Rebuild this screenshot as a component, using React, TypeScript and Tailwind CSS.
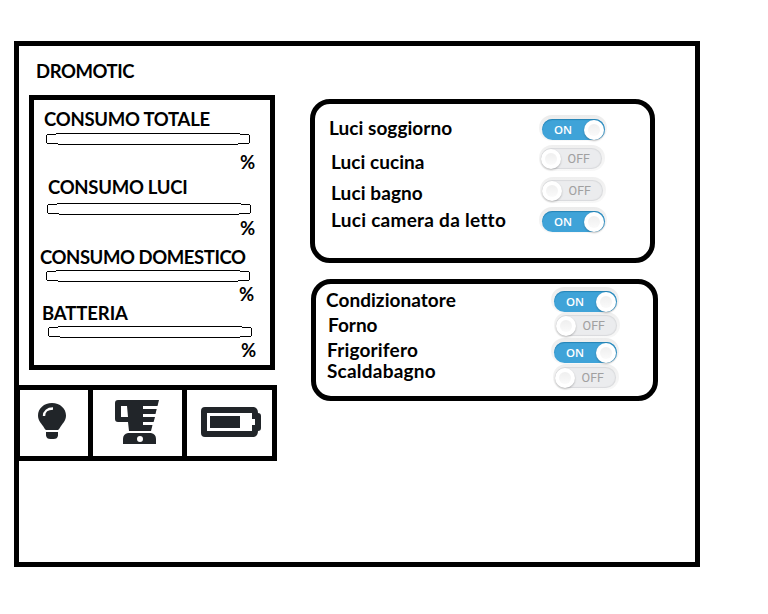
import React from "react";

const textStyle =
  "block h-6 whitespace-nowrap font-['Lato','Liberation_Sans',sans-serif] font-bold leading-6 text-black [font-variant-ligatures:none]";

function Heading({ text, className }: { text: string; className: string }) {
  return <span className={`${textStyle} text-[18.5px] ${className}`}>{text}</span>;
}

function Label({ text, className }: { text: string; className: string }) {
  return <span className={`${textStyle} text-[19px] ${className}`}>{text}</span>;
}

function Meter({ className }: { className: string }) {
  return (
    <svg className={`block h-3 w-[204px] ${className}`} viewBox="0 0 204 12" shapeRendering="crispEdges">
      <path
        d="M10 0H194V1H10ZM1 1H10V2H1ZM194 1H203V2H194ZM0 2H1V10H0ZM203 2H204V10H203ZM1 10H12V11H1ZM192 10H203V11H192ZM12 11H192V12H12Z"
        fill="#000"
      />
    </svg>
  );
}

function Toggle({ on, className }: { on: boolean; className: string }) {
  return on ? (
    <div className={`h-[26px] w-[68px] rounded-full bg-gradient-to-b from-[#ececec] to-[#f8f8f8] pl-[3px] pt-1 ${className}`}>
      <div className="flex h-[21px] w-[63px] items-center justify-between rounded-full bg-[#3fa3d8] pl-3 pr-px shadow-[inset_0_1px_1px_#2583b5]">
        <span className="font-['Open_Sans',sans-serif] text-[11.5px] font-semibold leading-none text-white">ON</span>
        <Knob />
      </div>
    </div>
  ) : (
    <div className={`h-[26px] w-[66px] rounded-full bg-gradient-to-b from-[#efefef] to-[#f8f8f8] pl-[2px] pt-[3px] ${className}`}>
      <div className="flex h-[21px] w-[61px] items-center justify-between rounded-full bg-[#ebecee] pr-3 shadow-[inset_0_0_1px_1px_#d9dadc]">
        <Knob />
        <span className="mt-px font-['Roboto',sans-serif] text-[12.5px] leading-none text-[#a0a0a0]">OFF</span>
      </div>
    </div>
  );
}

function Knob() {
  return (
    <div className="flex size-5 items-center justify-center rounded-full bg-white shadow-[0_1px_2px_#00000040]">
      <div className="size-3 rounded-full bg-gradient-to-b from-[#efefef] to-[#fafafa]" />
    </div>
  );
}

function Bulb() {
  return (
    <svg className="h-[37px] w-7" viewBox="0 0 28 37">
      <path
        d="M14 0C6 0 0 5.500 0 12.500C0 17.500 3 20 5 23C6.500 25.500 7 26.500 8 27H20C21 26.500 21.500 25.500 23 23C25 20 28 17.500 28 12.500C28 5.500 22 0 14 0ZM8 29H20V32.500Q19.500 36 15.500 36H12.500Q8.500 36 8 32.500Z"
        fill="#212529"
      />
      <path d="M6 13C6 8.500 9.500 5.500 15 5.500" fill="none" stroke="#fff" strokeWidth="2.4" />
    </svg>
  );
}

function Blender() {
  return (
    <svg className="h-11 w-11" viewBox="0 0 44 44">
      <path
        fillRule="evenodd"
        d="M3 0H44L42.500 6H28V9H41.700L40.500 14H28V17H40L38.600 22H28V25H37.500L36 31H14L13 22H3Q0 22 0 19V3Q0 0 3 0ZM6 6V17H13L12 6Z"
        fill="#212529"
      />
      <path
        fillRule="evenodd"
        d="M13 33H36Q41 34 41 39V44H8V39Q8 34 13 33ZM25 36A3 3 0 1 0 25 42A3 3 0 1 0 25 36Z"
        fill="#212529"
      />
    </svg>
  );
}

function Battery() {
  return (
    <svg className="h-[30px] w-[60px]" viewBox="0 0 60 30">
      <path
        fillRule="evenodd"
        d="M4 0H53Q57 1 57 6Q60 6 60 9V21Q60 24 57 24Q57 29 53 30H4Q0 30 0 26V4Q0 0 4 0ZM6 6V24H51V18H54V12H51V6Z"
        fill="#212529"
      />
      <path d="M9 9H39V21H9Z" fill="#212529" />
    </svg>
  );
}

export default function App() {
  return (
    <div className="h-[614px] w-[768px] overflow-hidden bg-white pl-3.5 pt-[41px]">
      <main className="flex h-[526px] w-[686px] border-[5px] border-black">
        <div className="w-[258px]">
          <Heading text="DROMOTIC" className="ml-[17px] mt-[13px] tracking-[-0.42px]" />
          <section className="ml-2.5 mt-3 flex h-[275px] w-[246px] flex-col border-[5px] border-black">
            <Heading text="CONSUMO TOTALE" className="ml-2.5 mt-[7px] tracking-[-0.25px]" />
            <Meter className="ml-3 mt-[2px]" />
            <Heading text="%" className="ml-[206px] mt-[5px]" />
            <Heading text="CONSUMO LUCI" className="ml-3.5 mt-px tracking-[-0.27px]" />
            <Meter className="ml-[13px] mt-1" />
            <Heading text="%" className="ml-[206px] mt-px" />
            <Heading text="CONSUMO DOMESTICO" className="ml-1.5 mt-[5px] tracking-[-0.42px]" />
            <Meter className="ml-3 mt-px" />
            <Heading text="%" className="ml-[205px]" />
            <Heading text="BATTERIA" className="ml-2 mt-[-5px] tracking-[-0.1px]" />
            <Meter className="ml-3.5 mt-px" />
            <Heading text="%" className="ml-[207px]" />
          </section>
          <nav className="mt-[15px] flex h-[76px] w-[258px] border-y-[5px] border-l border-r-[5px] border-black">
            <div className="flex w-[73px] border-r-[5px] border-black pl-[18px] pt-[13px]">
              <Bulb />
            </div>
            <div className="flex w-[94px] border-r-[5px] border-black pl-[22px] pt-2.5">
              <Blender />
            </div>
            <div className="flex pl-3.5 pt-[17px]">
              <Battery />
            </div>
          </nav>
        </div>
        <div className="ml-[33px] mt-[53px]">
          <section className="flex h-[164px] w-[345px] rounded-[20px] border-[5px] border-black">
            <div className="w-[224px]">
              <Label text="Luci soggiorno" className="ml-3.5 mt-3 tracking-[0.05px]" />
              <Label text="Luci cucina" className="ml-4 mt-2.5 tracking-[0.05px]" />
              <Label text="Luci bagno" className="ml-4 mt-[7px] tracking-[0.1px]" />
              <Label text="Luci camera da letto" className="ml-4 mt-[3px] tracking-[0.27px]" />
            </div>
            <div className="pt-[11px]">
              <Toggle on className="" />
              <Toggle on={false} className="mt-[4px]" />
              <Toggle on={false} className="ml-px mt-[6px]" />
              <Toggle on className="mt-[4px]" />
            </div>
          </section>
          <section className="ml-px mt-4 flex h-[122px] w-[347px] rounded-[20px] border-[5px] border-black">
            <div className="w-[235px]">
              <Label text="Condizionatore" className="ml-2.5 mt-1 tracking-[0.05px]" />
              <Label text="Forno" className="ml-3 mt-px" />
              <Label text="Frigorifero" className="ml-[11px] mt-px tracking-[0.18px]" />
              <Label text="Scaldabagno" className="ml-[11px] mt-[-3px] tracking-[0.22px]" />
            </div>
            <div className="pt-[3px]">
              <Toggle on className="" />
              <Toggle on={false} className="ml-[3px] mt-[-1px]" />
              <Toggle on className="" />
              <Toggle on={false} className="ml-[2px]" />
            </div>
          </section>
        </div>
      </main>
    </div>
  );
}
